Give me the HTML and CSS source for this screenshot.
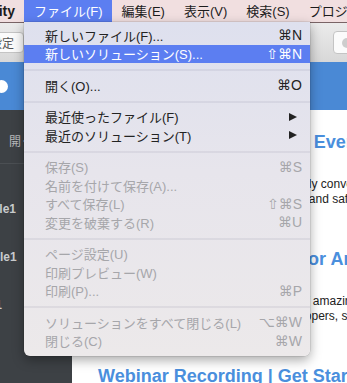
FILE: index.html
```html
<!DOCTYPE html>
<html>
<head>
  <meta charset="utf-8">
  <link rel="stylesheet" href="styles.css">
  <title>ファイル メニュー</title>
</head>
<body>
  <div class="screen">
    <div class="menubar">
      <span class="appname">Community</span>
      <span class="mb-item active">ファイル(F)</span>
      <span class="mb-item">編集(E)</span>
      <span class="mb-item">表示(V)</span>
      <span class="mb-item">検索(S)</span>
      <span class="mb-item">プロジェクト(P)</span>
    </div>

    <div class="toolbar">
      <button class="tb-btn">設定</button>
      <button class="tb-btn tb-search"><span class="tb-icon"></span></button>
    </div>

    <div class="banner"><span class="avatar"></span></div>

    <div class="workspace">
      <aside class="sidebar">
        <div class="side-open">開く ▾</div>
        <ul class="recent">
          <li>Console1</li>
          <li>Portable1</li>
          <li>Demo1</li>
        </ul>
      </aside>
      <main class="news">
        <h2>Xamarin Workshops and Events</h2>
        <p>Join us to learn how your app can quickly convert your code<br>your existing desktop apps to the cloud and safely ship</p>
        <h2>New Xamarin Inspector for Android</h2>
        <p>See the latest news and great demos of amazing apps<br>mobile apps built by our Xamarin developers, shared today</p>
        <h2>Webinar Recording | Get Started</h2>
      </main>
    </div>

    <!-- open file menu -->
    <div class="dropdown">
      <div class="item"><span class="label">新しいファイル(F)...</span><span class="key">⌘N</span></div>
      <div class="item selected"><span class="label">新しいソリューション(S)...</span><span class="key">⇧⌘N</span></div>
      <div class="sep"></div>
      <div class="item"><span class="label">開く(O)...</span><span class="key">⌘O</span></div>
      <div class="sep"></div>
      <div class="item"><span class="label">最近使ったファイル(F)</span><span class="arrow"></span></div>
      <div class="item"><span class="label">最近のソリューション(T)</span><span class="arrow"></span></div>
      <div class="sep"></div>
      <div class="item off"><span class="label">保存(S)</span><span class="key">⌘S</span></div>
      <div class="item off"><span class="label">名前を付けて保存(A)...</span></div>
      <div class="item off"><span class="label">すべて保存(L)</span><span class="key">⇧⌘S</span></div>
      <div class="item off"><span class="label">変更を破棄する(R)</span><span class="key">⌘U</span></div>
      <div class="sep"></div>
      <div class="item off"><span class="label">ページ設定(U)</span></div>
      <div class="item off"><span class="label">印刷プレビュー(W)</span></div>
      <div class="item off"><span class="label">印刷(P)...</span><span class="key">⌘P</span></div>
      <div class="sep"></div>
      <div class="item off"><span class="label">ソリューションをすべて閉じる(L)</span><span class="key">⌥⌘W</span></div>
      <div class="item off"><span class="label">閉じる(C)</span><span class="key">⌘W</span></div>
    </div>
  </div>
</body>
</html>
```

FILE: styles.css
```css
body {
  margin: 0;
  overflow: hidden;
}
.screen {
  position: relative;
  width: 347px;
  height: 383px;
  overflow: hidden;
  font-family: "Liberation Sans", "Noto Sans CJK JP", sans-serif;
}

/* system menu bar */
.menubar {
  display: flex;
  height: 22px;
  background: #f1dfe0;
  font-size: 13px;
  line-height: 23px;
  color: #1c1c1c;
  white-space: nowrap;
}
.appname {
  font-weight: bold;
  font-size: 14px;
  margin-left: -62px;
  padding-right: 9px;
}
.mb-item {
  padding: 0 9px 0 10px;
}
.mb-item.active {
  background: #5c7ef1;
  color: #fff;
}

/* app window */
.toolbar {
  display: flex;
  align-items: center;
  height: 40px;
  box-sizing: border-box;
  border-top: 1px solid #7a6466;
  background: linear-gradient(#ebebeb, #d8d8d8);
}
.tb-btn {
  height: 21px;
  padding: 0 9px;
  margin-left: -20px;
  border: 1px solid #c4c4c4;
  border-radius: 4px;
  background: #fbfbfb;
  font-family: "Liberation Sans", "Noto Sans CJK JP", sans-serif;
  font-size: 12px;
  color: #555;
}
.tb-search {
  height: 23px;
  width: 44px;
  margin-left: auto;
  margin-right: -30px;
  padding: 0 8px;
  text-align: left;
}
.tb-icon {
  display: block;
  width: 10px;
  height: 10px;
  border-radius: 50%;
  background: #cdcdcd;
}
.banner {
  display: flex;
  align-items: center;
  height: 48px;
  background: #4a89d5;
}
.avatar {
  width: 13px;
  height: 13px;
  margin-left: -5px;
  border-radius: 50%;
  background: #fff;
}
.workspace {
  display: flex;
  height: 273px;
}
.sidebar {
  flex: none;
  width: 72px;
  overflow: hidden;
  background: #3d4145;
  color: #c9cbcd;
}
.side-open {
  height: 54px;
  box-sizing: border-box;
  padding: 24px 0 0 9px;
  font-size: 12px;
  line-height: 16px;
  color: #b9babc;
  border-bottom: 1px solid #4b4f53;
}
.recent {
  list-style: none;
  margin: 0;
  padding: 21px 0 0;
}
.recent li {
  height: 48px;
  line-height: 48px;
  font-size: 12px;
  font-weight: bold;
  white-space: nowrap;
  text-indent: -38px;
}
.news {
  flex: 1;
  overflow: hidden;
  padding: 21px 0 0 26px;
  background: #fff;
  white-space: nowrap;
}
.news h2 {
  margin: 0 0 24px;
  font-size: 18px;
  line-height: 22px;
  color: #4a8fdd;
}
.news p {
  margin: 0 0 41px;
  font-size: 12px;
  line-height: 15px;
  color: #222;
}

/* dropdown */
.dropdown {
  position: absolute;
  top: 22px;
  left: 24px;
  width: 286px;
  padding: 4px 0 6px;
  border-radius: 0 0 6px 6px;
  background: linear-gradient(#dee0ee, #e7e5ec 45%, #ece9ea);
  box-shadow: 0 4px 12px rgba(0, 0, 0, 0.35), 0 0 0 0.5px rgba(0, 0, 0, 0.15);
  font-size: 13px;
  color: #232323;
}
.item {
  display: flex;
  align-items: center;
  height: 18.5px;
  padding: 0 8px 0 21px;
  white-space: nowrap;
}
.item .label {
  flex: 1;
}
.item .key {
  font-family: "Liberation Sans", "DejaVu Sans", sans-serif;
  font-size: 14px;
}
.item.selected {
  background: #5c7ef1;
  color: #fff;
}
.item.off {
  color: #a6a6aa;
}
.arrow {
  width: 0;
  height: 0;
  margin-right: 5px;
  border-left: 8px solid #222;
  border-top: 4.5px solid transparent;
  border-bottom: 4.5px solid transparent;
}
.sep {
  height: 2px;
  margin: 6px 0 5px;
  background: rgba(60, 60, 100, 0.08);
}
```
